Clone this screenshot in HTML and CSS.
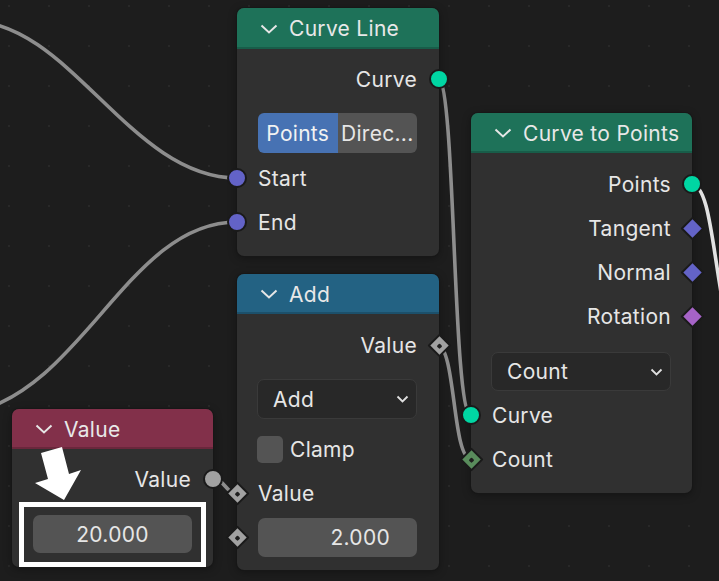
FILE: index.html
```html
<!DOCTYPE html>
<html>
<head>
<meta charset="utf-8">
<link rel="stylesheet" href="styles.css">
</head>
<body>
<div class="canvas">
  <svg class="wires" width="719" height="581" viewBox="0 0 719 581">
    <path class="wire" d="M -30 21 C 70 21, 130 178, 237 178"/>
    <path class="wire" d="M 237 222 C 130 222, 85 385, -25 412"/>
    <path class="wire" d="M 438 79 C 456 79, 452 415, 471 415"/>
    <path class="wire" d="M 437 345 C 456 345, 452 459, 471 459"/>
    <path class="wire" d="M 213 479 C 225 479, 225 493, 237 493"/>
    <path class="wire light" d="M 691 184 C 710 184, 712 250, 726 320"/>
  </svg>

  <div class="node n-curveline">
    <div class="node-header h-green">
      <svg class="chev" width="18" height="10" viewBox="0 0 18 10"><polyline points="1.5,1.5 9,8.5 16.5,1.5"/></svg>
      <span>Curve Line</span>
    </div>
    <div class="node-body pt8">
      <div class="row out"><span>Curve</span><i class="sock circ geo"></i></div>
      <div class="wrow mt12">
        <div class="seg">
          <div class="seg-item active">Points</div>
          <div class="seg-item">Direc...</div>
        </div>
      </div>
      <div class="row in mt3"><i class="sock circ vec"></i><span>Start</span></div>
      <div class="row in"><i class="sock circ vec"></i><span>End</span></div>
    </div>
  </div>

  <div class="node n-add">
    <div class="node-header h-blue">
      <svg class="chev" width="18" height="10" viewBox="0 0 18 10"><polyline points="1.5,1.5 9,8.5 16.5,1.5"/></svg>
      <span>Add</span>
    </div>
    <div class="node-body pt9">
      <div class="row out"><span>Value</span><i class="sock dia val"><b></b></i></div>
      <div class="wrow mt12 wl20">
        <div class="dropdown"><span>Add</span>
          <svg class="dd-chev" width="13" height="8" viewBox="0 0 13 8"><polyline points="1.5,1.5 6.5,6.5 11.5,1.5"/></svg>
        </div>
      </div>
      <div class="row in mt8"><span class="check"></span><span>Clamp</span></div>
      <div class="row in"><i class="sock dia val"><b></b></i><span>Value</span></div>
      <div class="wrow mt3 rel">
        <i class="sock dia val"><b></b></i>
        <div class="numfield right">2.000</div>
      </div>
    </div>
  </div>

  <div class="node n-c2p">
    <div class="node-header h-green">
      <svg class="chev" width="18" height="10" viewBox="0 0 18 10"><polyline points="1.5,1.5 9,8.5 16.5,1.5"/></svg>
      <span>Curve to Points</span>
    </div>
    <div class="node-body pt9">
      <div class="row out"><span>Points</span><i class="sock circ geo"></i></div>
      <div class="row out"><span>Tangent</span><i class="sock dia vec"></i></div>
      <div class="row out"><span>Normal</span><i class="sock dia vec"></i></div>
      <div class="row out"><span>Rotation</span><i class="sock dia rot"></i></div>
      <div class="wrow mt14 wl20 wr21">
        <div class="dropdown short"><span>Count</span>
          <svg class="dd-chev" width="13" height="8" viewBox="0 0 13 8"><polyline points="1.5,1.5 6.5,6.5 11.5,1.5"/></svg>
        </div>
      </div>
      <div class="row in mt2"><i class="sock circ geo"></i><span>Curve</span></div>
      <div class="row in"><i class="sock dia int"><b></b></i><span>Count</span></div>
    </div>
  </div>

  <div class="node n-value">
    <div class="node-header h-red">
      <svg class="chev" width="18" height="10" viewBox="0 0 18 10"><polyline points="1.5,1.5 9,8.5 16.5,1.5"/></svg>
      <span>Value</span>
    </div>
    <div class="node-body pt8">
      <div class="row out"><span>Value</span><i class="sock circ val"></i></div>
      <div class="wrow mt14 wr21">
        <div class="numfield short">20.000</div>
      </div>
    </div>
  </div>

  <div class="highlight"></div>
  <svg class="arrow" width="719" height="581" viewBox="0 0 719 581">
    <polygon points="41,453 62,447 69,474 81,470 64,500 35,483 48,479" fill="#ffffff"/>
  </svg>
</div>
</body>
</html>
```

FILE: styles.css
```css
html, body {
  margin: 0;
  padding: 0;
  background: #1d1d1d;
}

.canvas {
  position: relative;
  width: 719px;
  height: 581px;
  overflow: hidden;
  background-color: #1d1d1d;
  background-image: radial-gradient(circle at 1px 1px, #282828 1px, transparent 1.3px);
  background-size: 40px 40px;
  background-position: 8px 5px;
  font-family: Inter, "DejaVu Sans", sans-serif;
  color: #e6e6e6;
}

.wires {
  position: absolute;
  left: 0;
  top: 0;
}

.wire {
  fill: none;
  stroke: #8d8d8d;
  stroke-width: 3.6;
}

.wire.light {
  stroke: #e2e2e2;
}

.node {
  position: absolute;
  background: #303030;
  border-radius: 7px;
  box-shadow: 0 0 0 1px #171717, 0 2px 8px rgba(0, 0, 0, 0.35);
  font-size: 21px;
  letter-spacing: 0.3px;
}

.n-curveline { left: 237px; top: 8px; width: 202px; height: 248px; }
.n-add { left: 237px; top: 274px; width: 202px; height: 296px; }
.n-c2p { left: 471px; top: 113px; width: 221px; height: 380px; }
.n-value { left: 12px; top: 409px; width: 201px; height: 158px; }

.node-header {
  height: 40px;
  display: flex;
  align-items: center;
  gap: 11px;
  padding-left: 23px;
  border-radius: 7px 7px 0 0;
  box-shadow: inset 0 -2px 0 rgba(0, 0, 0, 0.18);
  color: #e8e8e8;
}

.n-curveline .node-header { height: 41px; }

.h-green { background: #1e7259; }
.h-blue { background: #236283; }
.h-red { background: #82304a; }

.chev polyline {
  fill: none;
  stroke: #e6e6e6;
  stroke-width: 2;
}

.node-body {
  display: flex;
  flex-direction: column;
}

.pt8 { padding-top: 8px; }
.pt9 { padding-top: 9px; }
.mt2 { margin-top: 2px; }
.mt3 { margin-top: 3px; }
.mt8 { margin-top: 8px; }
.mt12 { margin-top: 12px; }
.mt14 { margin-top: 14px; }

.row {
  position: relative;
  height: 44px;
  display: flex;
  align-items: center;
  padding: 0 21px;
}

.row.out {
  justify-content: flex-end;
  padding-right: 22px;
}

.n-c2p .row.out { padding-right: 21px; }

.sock {
  position: absolute;
  top: 50%;
  box-sizing: border-box;
  border: 2px solid #1a1a1a;
}

.sock.circ {
  width: 20px;
  height: 20px;
  margin-top: -10px;
  border-radius: 50%;
}

.row.out .sock.circ { right: -10px; }
.row.in .sock.circ { left: -10px; }

.sock.dia {
  width: 17px;
  height: 17px;
  margin-top: -8.5px;
  transform: rotate(45deg);
  border-radius: 1px;
  display: flex;
  align-items: center;
  justify-content: center;
}

.row.out .sock.dia { right: -8.5px; }
.row.in .sock.dia, .wrow .sock.dia { left: -8.5px; }

.sock.dia b {
  display: block;
  width: 4px;
  height: 4px;
  background: #1e1e1e;
  border-radius: 1px;
}

.geo { background: #00d6a3; }
.vec { background: #6363c7; }
.val { background: #a1a1a1; }
.rot { background: #a663c7; }
.int { background: #598c5c; }

.wrow {
  position: relative;
  display: flex;
  padding: 0 22px 0 21px;
}

.wl20 { padding-left: 20px; }
.wr21 { padding-right: 21px; }

.seg {
  flex: 1;
  height: 40px;
  display: flex;
  border-radius: 6px;
  overflow: hidden;
}

.seg-item {
  flex: 1;
  display: flex;
  align-items: center;
  justify-content: center;
  background: #545454;
  white-space: nowrap;
  overflow: hidden;
  padding-top: 1px;
}

.seg-item.active {
  background: #4772b3;
  color: #f2f2f2;
}

.dropdown {
  flex: 1;
  height: 40px;
  box-sizing: border-box;
  display: flex;
  align-items: center;
  justify-content: space-between;
  padding: 0 7px 0 15px;
  background: #282828;
  border: 1px solid #3a3a3a;
  border-radius: 7px;
}

.dropdown.short { height: 39px; }

.dd-chev polyline {
  fill: none;
  stroke: #e0e0e0;
  stroke-width: 1.8;
}

.check {
  width: 26px;
  height: 27px;
  border-radius: 5px;
  background: #545454;
  margin-left: -1px;
  margin-right: 7px;
}

.numfield {
  flex: 1;
  height: 39px;
  display: flex;
  align-items: center;
  justify-content: center;
  background: #545454;
  border-radius: 7px;
}

.numfield.short { height: 38px; }

.numfield.right {
  justify-content: flex-end;
  padding-right: 27px;
}

.wrow .sock.dia {
  top: 50%;
}

.highlight {
  position: absolute;
  left: 19px;
  top: 502px;
  width: 187px;
  height: 65px;
  box-sizing: border-box;
  border: 5px solid #ffffff;
}

.arrow {
  position: absolute;
  left: 0;
  top: 0;
}
```
